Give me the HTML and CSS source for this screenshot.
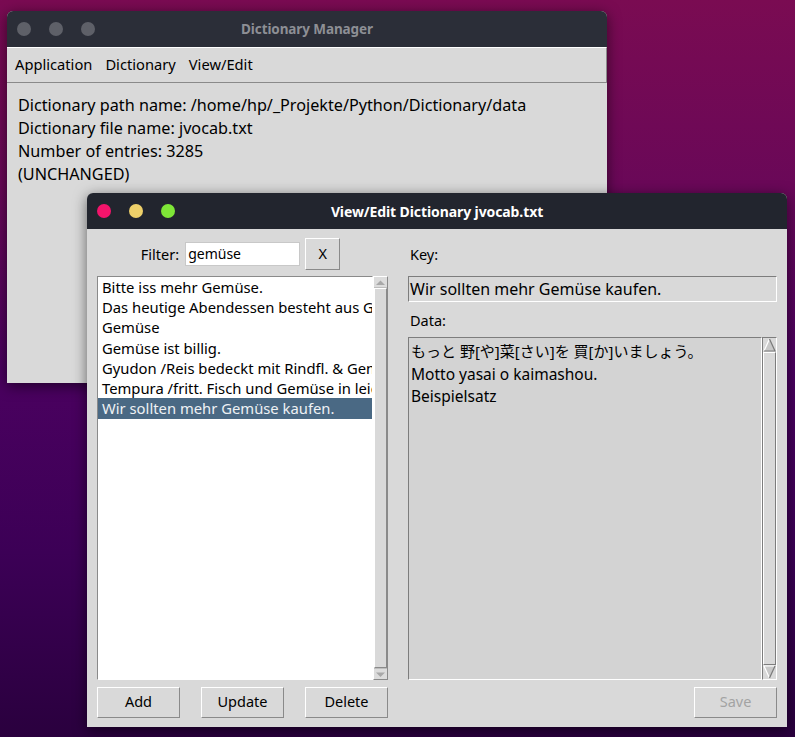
FILE: index.html
```html
<!DOCTYPE html>
<html>
<head>
<meta charset="utf-8">
<link rel="stylesheet" href="styles.css">
</head>
<body>
<div class="desktop">
  <div class="win main">
    <div class="titlebar inactive">
      <div class="dots"><span></span><span></span><span></span></div>
      <div class="title">Dictionary Manager</div>
    </div>
    <div class="menubar">
      <span class="menu">Application</span>
      <span class="menu">Dictionary</span>
      <span class="menu">View/Edit</span>
    </div>
    <div class="info">
      <div>Dictionary path name: /home/hp/_Projekte/Python/Dictionary/data</div>
      <div>Dictionary file name: jvocab.txt</div>
      <div>Number of entries: 3285</div>
      <div>(UNCHANGED)</div>
    </div>
  </div>

  <div class="win editor">
    <div class="titlebar active">
      <div class="dots color"><span class="d1"></span><span class="d2"></span><span class="d3"></span></div>
      <div class="title">View/Edit Dictionary jvocab.txt</div>
    </div>
    <div class="ebody">
      <div class="col left">
        <div class="filter-row">
          <span class="lbl">Filter:</span>
          <div class="entry">gemüse</div>
          <div class="btn xbtn">X</div>
        </div>
        <div class="listwrap">
          <div class="list">
            <div class="item">Bitte iss mehr Gemüse.</div>
            <div class="item">Das heutige Abendessen besteht aus Gemüse und Reis.</div>
            <div class="item">Gemüse</div>
            <div class="item">Gemüse ist billig.</div>
            <div class="item">Gyudon /Reis bedeckt mit Rindfl. &amp; Gemüse</div>
            <div class="item">Tempura /fritt. Fisch und Gemüse in leichtem Teig</div>
            <div class="item sel">Wir sollten mehr Gemüse kaufen.</div>
          </div>
          <div class="sb sb-mod">
            <div class="arr-mod"><svg width="13" height="9" viewBox="0 0 13 9"><polygon points="2,7 11,7 6.5,2.5" fill="#a8a8a8"/></svg></div>
            <div class="slider-mod"></div>
            <div class="arr-mod"><svg width="13" height="9" viewBox="0 0 13 9"><polygon points="2,2.5 11,2.5 6.5,7" fill="#a8a8a8"/></svg></div>
          </div>
        </div>
        <div class="btnrow">
          <div class="btn wide">Add</div>
          <div class="btn wide">Update</div>
          <div class="btn wide">Delete</div>
        </div>
      </div>
      <div class="col right">
        <div class="lbl-row">Key:</div>
        <div class="key-entry">Wir sollten mehr Gemüse kaufen.</div>
        <div class="lbl-row2">Data:</div>
        <div class="datawrap">
          <div class="data">
            <div class="jp">もっと 野[や]菜[さい]を 買[か]いましょう。</div>
            <div>Motto yasai o kaimashou.</div>
            <div>Beispielsatz</div>
          </div>
          <div class="sb sb-classic">
            <div class="arr-cl"><svg width="13" height="14" viewBox="0 0 13 14"><polygon points="1,13 12,13 6.5,1" fill="#c8c8c8"/><polyline points="1,13 6.5,1" stroke="#ffffff" stroke-width="1.2" fill="none"/><polyline points="1,13 12,13 6.5,1" stroke="#7a7a7a" stroke-width="1.2" fill="none"/></svg></div>
            <div class="slider-cl"></div>
            <div class="arr-cl"><svg width="13" height="14" viewBox="0 0 13 14"><polygon points="1,1 12,1 6.5,13" fill="#c8c8c8"/><polyline points="12,1 1,1 6.5,13" stroke="#ffffff" stroke-width="1.2" fill="none"/><polyline points="12,1 6.5,13" stroke="#7a7a7a" stroke-width="1.2" fill="none"/></svg></div>
          </div>
        </div>
        <div class="btnrow end">
          <div class="btn wide disabled">Save</div>
        </div>
      </div>
    </div>
  </div>
</div>
</body>
</html>
```

FILE: styles.css
```css
* { box-sizing: border-box; }
html, body { margin: 0; padding: 0; }
body {
  font-family: "Noto Sans", "Noto Sans CJK JP", sans-serif;
  color: #000;
}
.desktop {
  position: relative;
  width: 795px;
  height: 737px;
  overflow: hidden;
  background: linear-gradient(180deg, #7a0b52 0%, #6a0858 25%, #4b0160 50%, #3c0056 75%, #2a003e 100%);
}
.win {
  position: absolute;
  background: #d9d9d9;
  border-radius: 6px 6px 0 0;
  box-shadow: 0 3px 14px rgba(0,0,0,0.55);
  overflow: hidden;
  display: flex;
  flex-direction: column;
}
.main { left: 7px; top: 11px; width: 600px; height: 372px; }
.editor { left: 87px; top: 193px; width: 700px; height: 534px; }

.titlebar {
  position: relative;
  height: 36px;
  flex: none;
  display: flex;
  align-items: center;
  justify-content: center;
}
.titlebar.inactive { background: #2b2e38; }
.titlebar.active { background: #22252e; }
.dots {
  position: absolute;
  left: 10px;
  top: 11px;
  display: flex;
  gap: 18px;
}
.dots span {
  width: 14px; height: 14px; border-radius: 50%;
  background: #5e6068;
}
.dots.color .d1 { background: #f3146b; }
.dots.color .d2 { background: #eed06a; }
.dots.color .d3 { background: #7ee637; }
.title {
  font-weight: bold;
  font-size: 13.5px;
  letter-spacing: -0.1px;
}
.inactive .title { color: #8d8f95; }
.active .title { color: #ffffff; font-size: 14px; }

.menubar {
  height: 36px;
  flex: none;
  display: flex;
  align-items: center;
  padding-left: 8px;
  padding-bottom: 2px;
  border-top: 1px solid #ffffff;
  border-bottom: 1px solid #8a8a8a;
  border-right: 1px solid #8a8a8a;
  font-size: 14.7px;
}
.menu { padding: 0 7px 0 0; margin-right: 6px; }
.info {
  padding: 11px 11px;
  font-size: 16.2px;
  line-height: 23px;
}

.ebody {
  flex: 1;
  display: flex;
  gap: 20px;
  padding: 9px 10px 9px 10px;
  font-size: 14.5px;
}
.col { display: flex; flex-direction: column; }
.left { width: 291px; }
.right { width: 369px; }

.filter-row {
  height: 32px;
  display: flex;
  align-items: center;
  justify-content: center;
  gap: 5px;
  margin-left: -4px;
}
.lbl { margin-right: 1px; }
.entry {
  width: 115px;
  height: 24px;
  background: #fff;
  border: 1px solid #c8c8c8;
  padding-left: 2px;
  font-size: 14px;
  line-height: 22px;
}
.btn {
  background: #d9d9d9;
  border: 1px solid;
  border-color: #ffffff #8a8a8a #8a8a8a #ffffff;
  display: flex;
  align-items: center;
  justify-content: center;
  font-size: 14.5px;
  padding-bottom: 3px;
}
.xbtn { width: 35px; height: 32px; }
.wide { width: 83px; height: 31px; }
.disabled { color: #a3a3a3; }

.listwrap {
  margin-top: 6px;
  height: 404px;
  display: flex;
}
.list {
  flex: 1;
  background: #fff;
  border: 1px solid;
  border-color: #8a8a8a #ffffff #ffffff #8a8a8a;
  overflow: hidden;
  font-size: 14.8px;
}
.item {
  height: 20.2px;
  line-height: 20.2px;
  padding-left: 4px;
  white-space: nowrap;
  overflow: hidden;
}
.item.sel { background: #4a6984; color: #eef1f4; height: 21px; }

.sb {
  width: 15px;
  display: flex;
  flex-direction: column;
  background: #c4c4c4;
}
.sb-mod {
  border: 1px solid;
  border-color: #ffffff #8a8a8a #8a8a8a #ffffff;
  background: #d9d9d9;
}
.arr-mod {
  height: 11px;
  display: flex;
  align-items: center;
  justify-content: center;
  border-bottom: 1px solid #bdbdbd;
  background: #dcdcdc;
}
.arr-mod:last-child { border-bottom: none; border-top: 1px solid #bdbdbd; }
.slider-mod {
  flex: 1;
  border: 1px solid;
  border-color: #ffffff #8a8a8a #8a8a8a #ffffff;
  background: #d9d9d9;
}

.btnrow {
  margin-top: 7px;
  display: flex;
  justify-content: space-between;
}
.btnrow.end { justify-content: flex-end; }

.lbl-row {
  height: 32px;
  display: flex;
  align-items: center;
  padding-left: 2px;
}
.key-entry {
  margin-top: 6px;
  height: 26px;
  border: 1px solid;
  border-color: #7d7d7d #ffffff #ffffff #7d7d7d;
  font-size: 16px;
  line-height: 25px;
  padding-left: 1px;
  white-space: nowrap;
}
.lbl-row2 {
  height: 35px;
  display: flex;
  align-items: center;
  padding-left: 2px;
}
.datawrap {
  flex: 1;
  display: flex;
}
.data {
  flex: 1;
  background: #d3d3d3;
  border: 1px solid;
  border-color: #7d7d7d #ffffff #ffffff #7d7d7d;
  padding: 2px 2px;
  font-size: 15.5px;
  line-height: 22.5px;
}
.jp { font-family: "Noto Sans", "Noto Sans CJK JP", sans-serif; font-size: 15px; }
.sb-classic {
  background: #c4c4c4;
  border: 1px solid;
  border-color: #7d7d7d #ffffff #ffffff #7d7d7d;
}
.arr-cl {
  height: 14px;
  display: flex;
  align-items: center;
  justify-content: center;
  background: #d9d9d9;
}
.slider-cl {
  flex: 1;
  border: 1px solid;
  border-color: #ffffff #7d7d7d #7d7d7d #ffffff;
  background: #d9d9d9;
}
```
